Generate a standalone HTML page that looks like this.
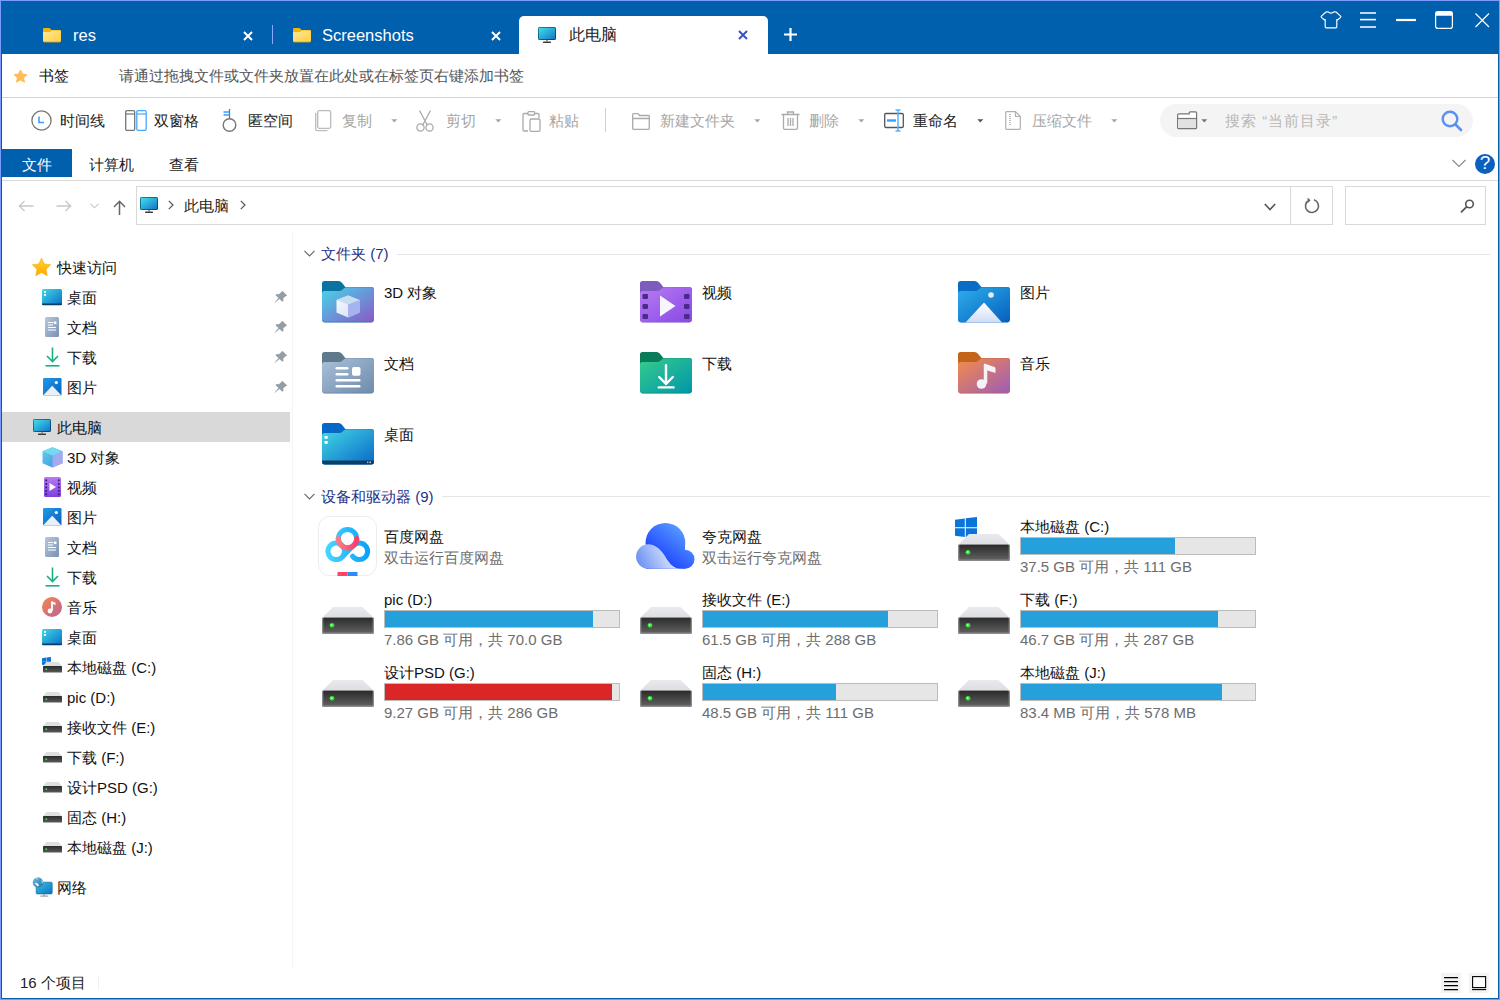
<!DOCTYPE html>
<html><head><meta charset="utf-8">
<style>
*{box-sizing:border-box;margin:0;padding:0}
html,body{width:1500px;height:1000px;overflow:hidden;background:#fff}
body{font-family:"Liberation Sans",sans-serif;font-size:15px;color:#000;position:relative}
.a{position:absolute;white-space:nowrap}
.t{position:absolute;white-space:nowrap;line-height:20px}
svg{position:absolute;overflow:visible}
</style></head><body>
<div class="a" style="left:0;top:0;width:1500px;height:1000px;border:1px solid #7b9bff"></div>
<div class="a" style="left:1px;top:1px;width:1498px;height:998px;border-left:1px solid #0060ae;border-right:1px solid #0060ae;border-bottom:1px solid #0060ae"></div>
<div class="a" style="left:1px;top:1px;width:1498px;height:53px;background:#0060ae"></div>

<svg style="left:43px;top:28px" width="18" height="14" viewBox="0 0 18 14"><defs><linearGradient id="fg42" x1="0" y1="0" x2="1" y2="1"><stop offset="0" stop-color="#ffe8a0"/><stop offset="1" stop-color="#ffcf3a"/></linearGradient></defs><path d="M0 1.2Q0 0 1.2 0H6Q6.7 0 7.2 0.6L8.5 2H16.8Q18 2 18 3.2V5H0Z" fill="#f5b40a"/><path d="M0 4H7.3L8.1 2.9Q8.4 2.5 8.9 2.5H16.8Q18 2.5 18 3.7V12.8Q18 14 16.8 14H1.2Q0 14 0 12.8Z" fill="url(#fg42)"/><path d="M0.3 13.2Q0.6 14 1.2 14H16.8Q17.4 14 17.7 13.2" stroke="#f0a800" stroke-width="0.8" fill="none"/></svg>
<div class="t" style="left:73px;top:25px;color:#fff;font-size:16.5px">res</div>
<svg style="left:243px;top:31px" width="10" height="10" viewBox="0 0 10 10"><path d="M1 1L9 9M9 1L1 9" stroke="#fff" stroke-width="2"/></svg>
<div class="a" style="left:272px;top:25px;width:1px;height:19px;background:#8aa8ff"></div>
<svg style="left:293px;top:28px" width="18" height="14" viewBox="0 0 18 14"><defs><linearGradient id="fg292" x1="0" y1="0" x2="1" y2="1"><stop offset="0" stop-color="#ffe8a0"/><stop offset="1" stop-color="#ffcf3a"/></linearGradient></defs><path d="M0 1.2Q0 0 1.2 0H6Q6.7 0 7.2 0.6L8.5 2H16.8Q18 2 18 3.2V5H0Z" fill="#f5b40a"/><path d="M0 4H7.3L8.1 2.9Q8.4 2.5 8.9 2.5H16.8Q18 2.5 18 3.7V12.8Q18 14 16.8 14H1.2Q0 14 0 12.8Z" fill="url(#fg292)"/><path d="M0.3 13.2Q0.6 14 1.2 14H16.8Q17.4 14 17.7 13.2" stroke="#f0a800" stroke-width="0.8" fill="none"/></svg>
<div class="t" style="left:322px;top:25px;color:#fff;font-size:16.5px">Screenshots</div>
<svg style="left:491px;top:31px" width="10" height="10" viewBox="0 0 10 10"><path d="M1 1L9 9M9 1L1 9" stroke="#fff" stroke-width="2"/></svg>
<div class="a" style="left:519px;top:16px;width:249px;height:38px;background:#fff;border-radius:5px 5px 0 0"></div>
<svg style="left:538px;top:27px" width="19" height="17" viewBox="0 0 19 17"><defs><linearGradient id="mgtab" x1="0" y1="0" x2="1" y2="1"><stop offset="0" stop-color="#42e2ec"/><stop offset="1" stop-color="#1272c6"/></linearGradient><linearGradient id="mbtab" x1="0" y1="0" x2="1" y2="1"><stop offset="0" stop-color="#168a9c"/><stop offset="1" stop-color="#0a3c78"/></linearGradient></defs><rect x="0.5" y="0.5" width="17" height="12" rx="0.6" fill="url(#mgtab)" stroke="url(#mbtab)" stroke-width="1"/><rect x="8" y="13" width="2" height="1.6" fill="#9aa0a6"/><rect x="5" y="14.6" width="8" height="1.5" rx="0.6" fill="#3c3c3c"/></svg>
<div class="t" style="left:569px;top:25px;color:#222;font-size:16px">此电脑</div>
<svg style="left:738px;top:30px" width="10" height="10" viewBox="0 0 10 10"><path d="M1 1L9 9M9 1L1 9" stroke="#3752c8" stroke-width="2"/></svg>
<svg style="left:783px;top:27px" width="15" height="15" viewBox="0 0 15 15"><path d="M7.5 1V14M1 7.5H14" stroke="#fff" stroke-width="2.2"/></svg>
<svg style="left:1321px;top:10px" width="21" height="20" viewBox="0 0 21 20"><path d="M5 2Q7.5 1.5 8.3 2.5Q10 3.8 11.7 2.5Q12.5 1.5 15 2L19.6 6.2Q20.2 6.8 19.6 7.4L16.5 10L15.8 9.6V17Q15.8 17.9 14.9 17.9H5.1Q4.2 17.9 4.2 17V9.6L3.5 10L0.4 7.4Q-0.2 6.8 0.4 6.2Z" fill="none" stroke="#fff" stroke-width="1.15" stroke-linejoin="round"/></svg>
<svg style="left:1360px;top:11px" width="17" height="18" viewBox="0 0 17 18"><path d="M0 2H16M0 16H16" stroke="#c4d6ec" stroke-width="1.8"/><path d="M0 8.6H16" stroke="#fff" stroke-width="1.6"/></svg>
<svg style="left:1396px;top:18px" width="21" height="4" viewBox="0 0 21 4"><path d="M0 2H20" stroke="#fff" stroke-width="2.2"/></svg>
<svg style="left:1435px;top:11px" width="19" height="19" viewBox="0 0 19 19"><rect x="0.6" y="0.6" width="16.8" height="16.8" rx="2.2" fill="none" stroke="#fff" stroke-width="1.2"/><path d="M0.6 2.8Q0.6 0.6 2.8 0.6H15.2Q17.4 0.6 17.4 2.8V4.8H0.6Z" fill="#fff"/></svg>
<svg style="left:1475px;top:13px" width="15" height="15" viewBox="0 0 15 15"><path d="M0.5 0.5L14 14M14 0.5L0.5 14" stroke="#fff" stroke-width="1.2"/></svg>


<svg style="left:13px;top:69px" width="15" height="15" viewBox="0 0 24 24"><path d="M12 1.5l3.1 6.6 7.2.9-5.3 5 1.4 7.1L12 17.6 5.6 21.1 7 14l-5.3-5 7.2-.9z" fill="#ffbb55" stroke="#ffbb55" stroke-width="1.5" stroke-linejoin="round"/></svg>
<div class="t" style="left:39px;top:66px;color:#111">书签</div>
<div class="t" style="left:119px;top:66px;color:#555">请通过拖拽文件或文件夹放置在此处或在标签页右键添加书签</div>
<div class="a" style="left:2px;top:97px;width:1496px;height:1px;background:#d4d4d4"></div>


<svg style="left:31px;top:110px" width="21" height="21" viewBox="0 0 21 21"><circle cx="10.5" cy="10.5" r="9.6" fill="none" stroke="#777" stroke-width="1.3"/><path d="M8 6.5V12.5H13" fill="none" stroke="#3aa0ff" stroke-width="1.6"/></svg>
<div class="t" style="left:60px;top:111px;color:#222">时间线</div>
<svg style="left:125px;top:110px" width="22" height="21" viewBox="0 0 22 21"><rect x="0.7" y="0.7" width="9" height="19.6" rx="1.2" fill="none" stroke="#777" stroke-width="1.3"/><path d="M1 4H9.5" stroke="#777" stroke-width="1.2"/><rect x="11.8" y="0.7" width="9.4" height="19.6" rx="1.2" fill="none" stroke="#46a8ff" stroke-width="1.3"/><path d="M12 4H21" stroke="#46a8ff" stroke-width="1.2"/></svg>
<div class="t" style="left:154px;top:111px;color:#222">双窗格</div>
<svg style="left:221px;top:109px" width="17" height="23" viewBox="0 0 17 23"><path d="M8.5 0V10" stroke="#777" stroke-width="1.3"/><path d="M2.5 3H8M2.5 6H8" stroke="#3aa0ff" stroke-width="1.3"/><circle cx="8.5" cy="16" r="6.3" fill="none" stroke="#777" stroke-width="1.4"/></svg>
<div class="t" style="left:248px;top:111px;color:#222">匿空间</div>
<svg style="left:315px;top:110px" width="17" height="22" viewBox="0 0 17 22"><path d="M0.7 3V19.3Q0.7 20.6 2 20.6H12.5" fill="none" stroke="#bbb" stroke-width="1.3"/><rect x="2.7" y="0.7" width="13" height="17.6" rx="1.5" fill="#fff" stroke="#bbb" stroke-width="1.3"/></svg>
<div class="t" style="left:342px;top:111px;color:#a6a6a6">复制</div>
<svg style="left:391px;top:119px" width="7" height="4" viewBox="0 0 7 4"><path d="M0.3 0.2H6.3L3.3 3.4Z" fill="#a6a6a6"/></svg>
<svg style="left:416px;top:110px" width="18" height="22" viewBox="0 0 18 22"><path d="M3.5 0.5L11.5 15.5M14.5 0.5L6.5 15.5" stroke="#aaa" stroke-width="1.3"/><circle cx="4.5" cy="17.5" r="3.6" fill="none" stroke="#aaa" stroke-width="1.3"/><circle cx="13.5" cy="17.5" r="3.6" fill="none" stroke="#aaa" stroke-width="1.3"/></svg>
<div class="t" style="left:446px;top:111px;color:#a6a6a6">剪切</div>
<svg style="left:495px;top:119px" width="7" height="4" viewBox="0 0 7 4"><path d="M0.3 0.2H6.3L3.3 3.4Z" fill="#a6a6a6"/></svg>
<svg style="left:522px;top:111px" width="19" height="21" viewBox="0 0 19 21"><path d="M6 2.5H2Q1 2.5 1 3.5V19Q1 20 2 20H6" fill="none" stroke="#aaa" stroke-width="1.3"/><path d="M12.5 2.5H16Q17 2.5 17 3.5V7" fill="none" stroke="#aaa" stroke-width="1.3"/><rect x="6" y="0.7" width="6.5" height="3.3" rx="0.8" fill="none" stroke="#aaa" stroke-width="1.3"/><rect x="8" y="8" width="10" height="12.3" rx="1.2" fill="#fff" stroke="#aaa" stroke-width="1.3"/></svg>
<div class="t" style="left:549px;top:111px;color:#a6a6a6">粘贴</div>
<div class="a" style="left:605px;top:108px;width:1px;height:24px;background:#d0d0d0"></div>
<svg style="left:632px;top:113px" width="18" height="17" viewBox="0 0 18 17"><path d="M0.7 1.5Q0.7 0.7 1.5 0.7H6L7.5 2.5H16.5Q17.3 2.5 17.3 3.3V15.5Q17.3 16.3 16.5 16.3H1.5Q0.7 16.3 0.7 15.5Z M0.7 5.5H17" fill="none" stroke="#aaa" stroke-width="1.3"/></svg>
<div class="t" style="left:660px;top:111px;color:#a6a6a6">新建文件夹</div>
<svg style="left:754px;top:119px" width="7" height="4" viewBox="0 0 7 4"><path d="M0.3 0.2H6.3L3.3 3.4Z" fill="#a6a6a6"/></svg>
<svg style="left:781px;top:111px" width="19" height="19" viewBox="0 0 19 19"><path d="M0.5 3.5H18.5M6.5 3.5V1H12.5V3.5M2.5 3.5V17Q2.5 18.3 3.8 18.3H15.2Q16.5 18.3 16.5 17V3.5M7 7V15M9.5 7V15M12 7V15" fill="none" stroke="#aaa" stroke-width="1.3"/></svg>
<div class="t" style="left:809px;top:111px;color:#a6a6a6">删除</div>
<svg style="left:858px;top:119px" width="7" height="4" viewBox="0 0 7 4"><path d="M0.3 0.2H6.3L3.3 3.4Z" fill="#a6a6a6"/></svg>
<svg style="left:884px;top:109px" width="21" height="23" viewBox="0 0 21 23"><rect x="0.7" y="4.5" width="18.6" height="14" rx="1.2" fill="none" stroke="#555" stroke-width="1.3"/><path d="M3 11.5H12" stroke="#3aa0ff" stroke-width="2.4"/><path d="M14 1V22M11.5 1H16.5M11.5 22H16.5" stroke="#56b4ff" stroke-width="1.5"/></svg>
<div class="t" style="left:913px;top:111px;color:#222">重命名</div>
<svg style="left:977px;top:119px" width="7" height="4" viewBox="0 0 7 4"><path d="M0.3 0.2H6.3L3.3 3.4Z" fill="#555"/></svg>
<svg style="left:1005px;top:111px" width="16" height="19" viewBox="0 0 16 19"><path d="M1.5 0.7H10.5L15.3 5.5V17.5Q15.3 18.3 14.5 18.3H1.5Q0.7 18.3 0.7 17.5V1.5Q0.7 0.7 1.5 0.7Z M10.5 0.7V5.5H15.3" fill="none" stroke="#b0b0b0" stroke-width="1.2"/><path d="M5 3V14" stroke="#bbb" stroke-width="2" stroke-dasharray="1,1"/></svg>
<div class="t" style="left:1032px;top:111px;color:#a6a6a6">压缩文件</div>
<svg style="left:1111px;top:119px" width="7" height="4" viewBox="0 0 7 4"><path d="M0.3 0.2H6.3L3.3 3.4Z" fill="#a6a6a6"/></svg>
<div class="a" style="left:1160px;top:104px;width:313px;height:33px;border-radius:17px;background:#f4f4f4"></div>
<svg style="left:1177px;top:111px" width="21" height="19" viewBox="0 0 21 19"><path d="M0.6 3.9Q0.6 2.9 1.6 2.9H12.2V1.8Q12.2 0.9 13.2 0.9H18.6Q19.6 0.9 19.6 1.9V16.7Q19.6 17.6 18.6 17.6H1.6Q0.6 17.6 0.6 16.6Z" fill="#fff" stroke="#777" stroke-width="1.2"/><rect x="1.2" y="7.5" width="17.8" height="9.5" fill="#e2e2e2"/><path d="M0.6 7.5H19.6" stroke="#777" stroke-width="1.2"/></svg>
<svg style="left:1201px;top:119px" width="7" height="4" viewBox="0 0 7 4"><path d="M0.3 0.2H6.3L3.3 3.4Z" fill="#777"/></svg>
<div class="t" style="left:1225px;top:111px;color:#b8b8b8;letter-spacing:1px">搜索 “当前目录”</div>
<svg style="left:1441px;top:110px" width="22" height="22" viewBox="0 0 22 22"><circle cx="9" cy="9" r="7.3" fill="none" stroke="#5b8ff2" stroke-width="2.4"/><path d="M14.5 14.5L20 20" stroke="#5b8ff2" stroke-width="2.6" stroke-linecap="round"/></svg>


<div class="a" style="left:2px;top:149px;width:70px;height:28px;background:#0060ae"></div>
<div class="t" style="left:22px;top:155px;color:#fff">文件</div>
<div class="t" style="left:89px;top:155px;color:#222">计算机</div>
<div class="t" style="left:169px;top:155px;color:#222">查看</div>
<svg style="left:1452px;top:159px" width="14" height="9" viewBox="0 0 14 9"><path d="M0.5 1L7 7.5L13.5 1" fill="none" stroke="#888" stroke-width="1.1"/></svg>
<svg style="left:1475px;top:154px" width="20" height="20" viewBox="0 0 20 20"><circle cx="10" cy="10" r="10" fill="#0a5fbf"/></svg>
<div class="t" style="left:1479px;top:153px;color:#fff;font-size:19px;width:12px;text-align:center">?</div>
<div class="a" style="left:2px;top:180px;width:1496px;height:1px;background:#dadada"></div>


<svg style="left:18px;top:200px" width="16" height="12" viewBox="0 0 16 12"><path d="M15.5 6H1.5M6.5 1L1.3 6L6.5 11" fill="none" stroke="#c8c8c8" stroke-width="1.3"/></svg>
<svg style="left:56px;top:200px" width="16" height="12" viewBox="0 0 16 12"><path d="M0.5 6H14.5M9.5 1L14.7 6L9.5 11" fill="none" stroke="#c8c8c8" stroke-width="1.3"/></svg>
<svg style="left:90px;top:203px" width="9" height="6" viewBox="0 0 9 6"><path d="M0.5 0.8L4.5 4.8L8.5 0.8" fill="none" stroke="#c8c8c8" stroke-width="1.1"/></svg>
<svg style="left:113px;top:200px" width="13" height="15" viewBox="0 0 13 15"><path d="M6.5 15V1.5M1 7L6.5 1.3L12 7" fill="none" stroke="#666" stroke-width="1.5"/></svg>
<div class="a" style="left:136px;top:186px;width:1197px;height:39px;border:1px solid #d9d9d9"></div>
<div class="a" style="left:1290px;top:186px;width:1px;height:39px;background:#d9d9d9"></div>
<svg style="left:140px;top:197px" width="19" height="17" viewBox="0 0 19 17"><defs><linearGradient id="mgaddr" x1="0" y1="0" x2="1" y2="1"><stop offset="0" stop-color="#42e2ec"/><stop offset="1" stop-color="#1272c6"/></linearGradient><linearGradient id="mbaddr" x1="0" y1="0" x2="1" y2="1"><stop offset="0" stop-color="#168a9c"/><stop offset="1" stop-color="#0a3c78"/></linearGradient></defs><rect x="0.5" y="0.5" width="17" height="12" rx="0.6" fill="url(#mgaddr)" stroke="url(#mbaddr)" stroke-width="1"/><rect x="8" y="13" width="2" height="1.6" fill="#9aa0a6"/><rect x="5" y="14.6" width="8" height="1.5" rx="0.6" fill="#3c3c3c"/></svg>
<svg style="left:168px;top:200px" width="6" height="10" viewBox="0 0 6 10"><path d="M0.8 0.8L5 5L0.8 9.2" fill="none" stroke="#555" stroke-width="1.2"/></svg>
<div class="t" style="left:184px;top:196px;color:#222">此电脑</div>
<svg style="left:240px;top:200px" width="6" height="10" viewBox="0 0 6 10"><path d="M0.8 0.8L5 5L0.8 9.2" fill="none" stroke="#555" stroke-width="1.2"/></svg>
<svg style="left:1264px;top:203px" width="12" height="8" viewBox="0 0 12 8"><path d="M0.8 1L6 6.5L11.2 1" fill="none" stroke="#555" stroke-width="1.6"/></svg>
<svg style="left:1304px;top:198px" width="16" height="16" viewBox="0 0 16 16"><path d="M5 2.2A6.5 6.5 0 1 0 10 1.8" fill="none" stroke="#666" stroke-width="1.6"/><path d="M3.5 0.5L5.5 2.3L3.5 4.2" fill="none" stroke="#666" stroke-width="1.5"/></svg>
<div class="a" style="left:1345px;top:186px;width:141px;height:39px;border:1px solid #d9d9d9"></div>
<svg style="left:1460px;top:199px" width="15" height="14" viewBox="0 0 15 14"><circle cx="9.5" cy="5" r="3.8" fill="none" stroke="#555" stroke-width="1.6"/><path d="M6.8 7.7L1 13.3" stroke="#555" stroke-width="1.8"/></svg>
<div class="a" style="left:292px;top:232px;width:1px;height:736px;background:#f4f4f4"></div>
<svg style="left:31px;top:257px" width="21" height="21" viewBox="0 0 24 24"><defs><linearGradient id="u1" x1="0" y1="0" x2="0" y2="1"><stop offset="0" stop-color="#ffd52e"/><stop offset="1" stop-color="#ffa800"/></linearGradient></defs><path d="M12 1.2l3.2 6.7 7.3 1-5.3 5.1 1.3 7.3L12 17.8l-6.5 3.5 1.3-7.3L1.5 8.9l7.3-1z" fill="url(#u1)" stroke="#f0a500" stroke-width="0.6" stroke-linejoin="round"/></svg>
<div class="t" style="left:57px;top:258px;color:#111;">快速访问</div>
<svg style="left:42px;top:289px" width="21" height="17" viewBox="0 0 21 17"><defs><linearGradient id="u2" x1="0" y1="0" x2="1" y2="1"><stop offset="0" stop-color="#3fd8e8"/><stop offset="1" stop-color="#0b6fc6"/></linearGradient></defs><rect x="0" y="0" width="20" height="16" rx="1.5" fill="url(#u2)"/><path d="M0 14.5H20V15Q20 16.3 18.7 16.3H1.3Q0 16.3 0 15Z" fill="#0a3d66"/><rect x="2" y="2" width="2" height="1.8" fill="#fff"/><rect x="2" y="5" width="2" height="1.8" fill="#fff"/></svg>
<div class="t" style="left:67px;top:288px;color:#111;">桌面</div>
<svg style="left:274px;top:290px" width="14" height="13" viewBox="0 0 14 13"><path d="M8.2 0.8L13.2 5.6L11.6 6.2L9.2 8.6L9.5 10.8L8.3 11.8L5.5 9L1 12.8L0.6 12.4L4.5 8L1.6 5.2L2.6 4L4.8 4.3L7.4 1.9Z" fill="#939ea6"/></svg>
<svg style="left:45px;top:317px" width="15" height="20" viewBox="0 0 15 20"><defs><linearGradient id="u3" x1="0" y1="0" x2="1" y2="1"><stop offset="0" stop-color="#b7c8dc"/><stop offset="1" stop-color="#7892b2"/></linearGradient></defs><rect x="0" y="0" width="14" height="20" rx="1.5" fill="url(#u3)"/><path d="M3 5.5H8M3 8H8M3 10.5H11M3 13H11" stroke="#fff" stroke-width="1"/><rect x="8.8" y="4.5" width="2.6" height="2.6" fill="#fff"/></svg>
<div class="t" style="left:67px;top:318px;color:#111;">文档</div>
<svg style="left:274px;top:320px" width="14" height="13" viewBox="0 0 14 13"><path d="M8.2 0.8L13.2 5.6L11.6 6.2L9.2 8.6L9.5 10.8L8.3 11.8L5.5 9L1 12.8L0.6 12.4L4.5 8L1.6 5.2L2.6 4L4.8 4.3L7.4 1.9Z" fill="#939ea6"/></svg>
<svg style="left:45px;top:347px" width="15" height="20" viewBox="0 0 15 20"><path d="M7.5 0.5V14.5M2 9L7.5 14.5L13 9" fill="none" stroke="#1aae82" stroke-width="1.6"/><path d="M0.5 18.8H14.5" stroke="#1aae82" stroke-width="1.6"/></svg>
<div class="t" style="left:67px;top:348px;color:#111;">下载</div>
<svg style="left:274px;top:350px" width="14" height="13" viewBox="0 0 14 13"><path d="M8.2 0.8L13.2 5.6L11.6 6.2L9.2 8.6L9.5 10.8L8.3 11.8L5.5 9L1 12.8L0.6 12.4L4.5 8L1.6 5.2L2.6 4L4.8 4.3L7.4 1.9Z" fill="#939ea6"/></svg>
<svg style="left:43px;top:378px" width="19" height="18" viewBox="0 0 19 18"><defs><linearGradient id="u4" x1="0" y1="0" x2="1" y2="1"><stop offset="0" stop-color="#1f9be8"/><stop offset="1" stop-color="#0a60c0"/></linearGradient></defs><rect x="0" y="0" width="18.5" height="17.5" rx="1.2" fill="url(#u4)"/><circle cx="13.3" cy="4.5" r="1.6" fill="#fff"/><path d="M0 17.5L9.2 7.8L18.5 17.5Z" fill="#e8f0fb"/></svg>
<div class="t" style="left:67px;top:378px;color:#111;">图片</div>
<svg style="left:274px;top:380px" width="14" height="13" viewBox="0 0 14 13"><path d="M8.2 0.8L13.2 5.6L11.6 6.2L9.2 8.6L9.5 10.8L8.3 11.8L5.5 9L1 12.8L0.6 12.4L4.5 8L1.6 5.2L2.6 4L4.8 4.3L7.4 1.9Z" fill="#939ea6"/></svg>
<div class="a" style="left:2px;top:412px;width:288px;height:30px;background:#d9d9d9"></div>
<svg style="left:33px;top:419px" width="19" height="17" viewBox="0 0 19 17"><defs><linearGradient id="mgu5" x1="0" y1="0" x2="1" y2="1"><stop offset="0" stop-color="#42e2ec"/><stop offset="1" stop-color="#1272c6"/></linearGradient><linearGradient id="mbu5" x1="0" y1="0" x2="1" y2="1"><stop offset="0" stop-color="#168a9c"/><stop offset="1" stop-color="#0a3c78"/></linearGradient></defs><rect x="0.5" y="0.5" width="17" height="12" rx="0.6" fill="url(#mgu5)" stroke="url(#mbu5)" stroke-width="1"/><rect x="8" y="13" width="2" height="1.6" fill="#9aa0a6"/><rect x="5" y="14.6" width="8" height="1.5" rx="0.6" fill="#3c3c3c"/></svg>
<div class="t" style="left:57px;top:418px;color:#111;">此电脑</div>
<svg style="left:42px;top:447px" width="21" height="21" viewBox="0 0 21 21"><defs><linearGradient id="u6" x1="0" y1="0" x2="1" y2="1"><stop offset="0" stop-color="#62d2f0"/><stop offset="1" stop-color="#3b8fd8"/></linearGradient><linearGradient id="u7" x1="0" y1="0" x2="1" y2="1"><stop offset="0" stop-color="#8fb0f0"/><stop offset="1" stop-color="#b7a4ec"/></linearGradient></defs><path d="M10.5 0.3L20.5 4.3V16.3L10.5 20.5L0.5 16.3V4.3Z" fill="url(#u6)"/><path d="M10.5 8.5V20.5L20.5 16.3V4.3Z" fill="url(#u7)"/><path d="M0.5 4.3L10.5 8.5L20.5 4.3L10.5 0.3Z" fill="#77d8f2"/></svg>
<div class="t" style="left:67px;top:448px;color:#111;">3D 对象</div>
<svg style="left:44px;top:477px" width="17" height="20" viewBox="0 0 17 20"><defs><linearGradient id="u8" x1="0" y1="0" x2="0" y2="1"><stop offset="0" stop-color="#b77af2"/><stop offset="1" stop-color="#7f3fe0"/></linearGradient></defs><rect x="0" y="0" width="17" height="20" rx="1.5" fill="url(#u8)"/><rect x="1.3" y="2.5" width="1.8" height="1.8" fill="#3b1f72"/><rect x="1.3" y="6" width="1.8" height="1.8" fill="#3b1f72"/><rect x="1.3" y="9.5" width="1.8" height="1.8" fill="#3b1f72"/><rect x="1.3" y="13" width="1.8" height="1.8" fill="#3b1f72"/><rect x="1.3" y="16.3" width="1.8" height="1.8" fill="#3b1f72"/><rect x="13.9" y="2.5" width="1.8" height="1.8" fill="#3b1f72"/><rect x="13.9" y="6" width="1.8" height="1.8" fill="#3b1f72"/><rect x="13.9" y="9.5" width="1.8" height="1.8" fill="#3b1f72"/><rect x="13.9" y="13" width="1.8" height="1.8" fill="#3b1f72"/><rect x="13.9" y="16.3" width="1.8" height="1.8" fill="#3b1f72"/><path d="M5.5 6L12 10L5.5 14Z" fill="#fff"/></svg>
<div class="t" style="left:67px;top:478px;color:#111;">视频</div>
<svg style="left:43px;top:508px" width="19" height="18" viewBox="0 0 19 18"><defs><linearGradient id="u9" x1="0" y1="0" x2="1" y2="1"><stop offset="0" stop-color="#1f9be8"/><stop offset="1" stop-color="#0a60c0"/></linearGradient></defs><rect x="0" y="0" width="18.5" height="17.5" rx="1.2" fill="url(#u9)"/><circle cx="13.3" cy="4.5" r="1.6" fill="#fff"/><path d="M0 17.5L9.2 7.8L18.5 17.5Z" fill="#e8f0fb"/></svg>
<div class="t" style="left:67px;top:508px;color:#111;">图片</div>
<svg style="left:45px;top:537px" width="15" height="20" viewBox="0 0 15 20"><defs><linearGradient id="u10" x1="0" y1="0" x2="1" y2="1"><stop offset="0" stop-color="#b7c8dc"/><stop offset="1" stop-color="#7892b2"/></linearGradient></defs><rect x="0" y="0" width="14" height="20" rx="1.5" fill="url(#u10)"/><path d="M3 5.5H8M3 8H8M3 10.5H11M3 13H11" stroke="#fff" stroke-width="1"/><rect x="8.8" y="4.5" width="2.6" height="2.6" fill="#fff"/></svg>
<div class="t" style="left:67px;top:538px;color:#111;">文档</div>
<svg style="left:45px;top:567px" width="15" height="20" viewBox="0 0 15 20"><path d="M7.5 0.5V14.5M2 9L7.5 14.5L13 9" fill="none" stroke="#1aae82" stroke-width="1.6"/><path d="M0.5 18.8H14.5" stroke="#1aae82" stroke-width="1.6"/></svg>
<div class="t" style="left:67px;top:568px;color:#111;">下载</div>
<svg style="left:42px;top:597px" width="20" height="20" viewBox="0 0 20 20"><defs><linearGradient id="u11" x1="0" y1="0" x2="1" y2="1"><stop offset="0" stop-color="#f58a48"/><stop offset="1" stop-color="#b8609e"/></linearGradient></defs><circle cx="10" cy="10" r="10" fill="url(#u11)"/><path d="M10 4.5V13.5" stroke="#fff" stroke-width="1.8"/><path d="M9.5 4.2L13.5 5.8V8L9.5 6.6Z" fill="#fff"/><circle cx="8" cy="14" r="2.4" fill="#fff"/></svg>
<div class="t" style="left:67px;top:598px;color:#111;">音乐</div>
<svg style="left:42px;top:629px" width="21" height="17" viewBox="0 0 21 17"><defs><linearGradient id="u12" x1="0" y1="0" x2="1" y2="1"><stop offset="0" stop-color="#3fd8e8"/><stop offset="1" stop-color="#0b6fc6"/></linearGradient></defs><rect x="0" y="0" width="20" height="16" rx="1.5" fill="url(#u12)"/><path d="M0 14.5H20V15Q20 16.3 18.7 16.3H1.3Q0 16.3 0 15Z" fill="#0a3d66"/><rect x="2" y="2" width="2" height="1.8" fill="#fff"/><rect x="2" y="5" width="2" height="1.8" fill="#fff"/></svg>
<div class="t" style="left:67px;top:628px;color:#111;">桌面</div>
<svg style="left:42px;top:657px" width="9" height="9" viewBox="0 0 22 22"><path d="M0 2.8L9.8 1.5V10.3H0Z M10.8 1.35L22 0V10.3H10.8Z M0 11.3H9.8V20L0 18.7Z M10.8 11.3H22V21.5L10.8 20.1Z" fill="#0a74da"/></svg><svg style="left:43px;top:662px" width="19" height="11" viewBox="0 0 19 11"><defs><linearGradient id="u13" x1="0" y1="0" x2="0" y2="1"><stop offset="0" stop-color="#2b2b2b"/><stop offset="1" stop-color="#5a5a5a"/></linearGradient></defs><path d="M3.5 0H15.5L19 4H0Z" fill="#dedfe2"/><rect x="0" y="4" width="19" height="6.5" rx="0.6" fill="url(#u13)"/><circle cx="3.3" cy="7.2" r="0.9" fill="#3fe03f"/></svg>
<div class="t" style="left:67px;top:658px;color:#111;">本地磁盘 (C:)</div>
<svg style="left:43px;top:692px" width="19" height="11" viewBox="0 0 19 11"><defs><linearGradient id="u14" x1="0" y1="0" x2="0" y2="1"><stop offset="0" stop-color="#2b2b2b"/><stop offset="1" stop-color="#5a5a5a"/></linearGradient></defs><path d="M3.5 0H15.5L19 4H0Z" fill="#dedfe2"/><rect x="0" y="4" width="19" height="6.5" rx="0.6" fill="url(#u14)"/><circle cx="3.3" cy="7.2" r="0.9" fill="#3fe03f"/></svg>
<div class="t" style="left:67px;top:688px;color:#111;">pic (D:)</div>
<svg style="left:43px;top:722px" width="19" height="11" viewBox="0 0 19 11"><defs><linearGradient id="u15" x1="0" y1="0" x2="0" y2="1"><stop offset="0" stop-color="#2b2b2b"/><stop offset="1" stop-color="#5a5a5a"/></linearGradient></defs><path d="M3.5 0H15.5L19 4H0Z" fill="#dedfe2"/><rect x="0" y="4" width="19" height="6.5" rx="0.6" fill="url(#u15)"/><circle cx="3.3" cy="7.2" r="0.9" fill="#3fe03f"/></svg>
<div class="t" style="left:67px;top:718px;color:#111;">接收文件 (E:)</div>
<svg style="left:43px;top:752px" width="19" height="11" viewBox="0 0 19 11"><defs><linearGradient id="u16" x1="0" y1="0" x2="0" y2="1"><stop offset="0" stop-color="#2b2b2b"/><stop offset="1" stop-color="#5a5a5a"/></linearGradient></defs><path d="M3.5 0H15.5L19 4H0Z" fill="#dedfe2"/><rect x="0" y="4" width="19" height="6.5" rx="0.6" fill="url(#u16)"/><circle cx="3.3" cy="7.2" r="0.9" fill="#3fe03f"/></svg>
<div class="t" style="left:67px;top:748px;color:#111;">下载 (F:)</div>
<svg style="left:43px;top:782px" width="19" height="11" viewBox="0 0 19 11"><defs><linearGradient id="u17" x1="0" y1="0" x2="0" y2="1"><stop offset="0" stop-color="#2b2b2b"/><stop offset="1" stop-color="#5a5a5a"/></linearGradient></defs><path d="M3.5 0H15.5L19 4H0Z" fill="#dedfe2"/><rect x="0" y="4" width="19" height="6.5" rx="0.6" fill="url(#u17)"/><circle cx="3.3" cy="7.2" r="0.9" fill="#3fe03f"/></svg>
<div class="t" style="left:67px;top:778px;color:#111;">设计PSD (G:)</div>
<svg style="left:43px;top:812px" width="19" height="11" viewBox="0 0 19 11"><defs><linearGradient id="u18" x1="0" y1="0" x2="0" y2="1"><stop offset="0" stop-color="#2b2b2b"/><stop offset="1" stop-color="#5a5a5a"/></linearGradient></defs><path d="M3.5 0H15.5L19 4H0Z" fill="#dedfe2"/><rect x="0" y="4" width="19" height="6.5" rx="0.6" fill="url(#u18)"/><circle cx="3.3" cy="7.2" r="0.9" fill="#3fe03f"/></svg>
<div class="t" style="left:67px;top:808px;color:#111;">固态 (H:)</div>
<svg style="left:43px;top:842px" width="19" height="11" viewBox="0 0 19 11"><defs><linearGradient id="u19" x1="0" y1="0" x2="0" y2="1"><stop offset="0" stop-color="#2b2b2b"/><stop offset="1" stop-color="#5a5a5a"/></linearGradient></defs><path d="M3.5 0H15.5L19 4H0Z" fill="#dedfe2"/><rect x="0" y="4" width="19" height="6.5" rx="0.6" fill="url(#u19)"/><circle cx="3.3" cy="7.2" r="0.9" fill="#3fe03f"/></svg>
<div class="t" style="left:67px;top:838px;color:#111;">本地磁盘 (J:)</div>
<svg style="left:32px;top:877px" width="21" height="21" viewBox="0 0 21 21"><defs><linearGradient id="u20" x1="0" y1="0" x2="1" y2="1"><stop offset="0" stop-color="#34c6e2"/><stop offset="1" stop-color="#0f72c0"/></linearGradient><linearGradient id="u21" x1="0" y1="0" x2="1" y2="1"><stop offset="0" stop-color="#6cc0ea"/><stop offset="1" stop-color="#2470a2"/></linearGradient></defs><rect x="4.2" y="5.2" width="16" height="11.7" rx="1" fill="url(#u20)" stroke="#176e9c" stroke-width="0.7"/><rect x="11.4" y="17" width="1.6" height="2" fill="#9aa5ad"/><rect x="8.3" y="18.6" width="8" height="1.2" rx="0.5" fill="#9aa5ad"/><circle cx="5.9" cy="5.4" r="5.2" fill="url(#u21)"/><path d="M2.5 6.2L5 5.8L7.2 8.2L5.5 9.5Z M3.2 1.6L5.5 1.2L6 2.6Z M9.5 2.5L10.8 5.8L9.8 6.5Z" fill="#dff3fb"/></svg>
<div class="t" style="left:57px;top:878px;color:#111;">网络</div><svg style="left:304px;top:250px" width="11" height="7" viewBox="0 0 11 7"><path d="M0.5 0.8L5.5 6L10.5 0.8" fill="none" stroke="#666" stroke-width="1.1"/></svg>
<div class="t" style="left:321px;top:244px;color:#1e3287;">文件夹 (7)</div>
<div class="a" style="left:397px;top:254px;width:1093px;height:1px;background:#e5e5e5"></div>
<svg style="left:322px;top:281px" width="52" height="42" viewBox="0 0 52 42"><defs><linearGradient id="u24" x1="0" y1="0" x2="1" y2="1"><stop offset="0" stop-color="#46d6ea"/><stop offset="1" stop-color="#8b58c6"/></linearGradient></defs>
<path d="M0 2.5Q0 0 2.5 0H16.5Q18.5 0 20 1.8L23.3 6H49.5Q52 6 52 8.5V14H0Z" fill="#0b73a0"/>
<path d="M0 12.5Q0 10 2.5 10H17.5Q19.5 10 21 8.2L22 7.2Q23 6.3 25 6.3H49.5Q52 6.3 52 9V38.8Q52 41.2 49.5 41.2H2.5Q0 41.2 0 38.8Z" fill="url(#u24)"/>
<path d="M0.5 39.2Q1 41.2 2.5 41.2H49.5Q51 41.2 51.5 39.2" fill="none" stroke="#0b73a0" stroke-width="1" opacity="0.6"/>
<defs><linearGradient id="u22" x1="0" y1="0" x2="1" y2="1"><stop offset="0" stop-color="#ffffff"/><stop offset="1" stop-color="#d6e4f5"/></linearGradient></defs>
<path d="M26 14.5L37.5 19V31.5L26 36.5L14.5 31.5V19Z" fill="url(#u22)" opacity="0.95"/>
<path d="M14.5 19L26 23.5L37.5 19L26 14.5Z" fill="#c4def2"/>
<path d="M26 23.5V36.5L37.5 31.5V19Z" fill="#a7b3ef"/></svg>
<div class="t" style="left:384px;top:283px;color:#111;">3D 对象</div>
<svg style="left:640px;top:281px" width="52" height="42" viewBox="0 0 52 42"><defs><linearGradient id="u25" x1="0" y1="0" x2="1" y2="1"><stop offset="0" stop-color="#b77cf2"/><stop offset="1" stop-color="#8848e6"/></linearGradient></defs>
<path d="M0 2.5Q0 0 2.5 0H16.5Q18.5 0 20 1.8L23.3 6H49.5Q52 6 52 8.5V14H0Z" fill="#7d5cbd"/>
<path d="M0 12.5Q0 10 2.5 10H17.5Q19.5 10 21 8.2L22 7.2Q23 6.3 25 6.3H49.5Q52 6.3 52 9V38.8Q52 41.2 49.5 41.2H2.5Q0 41.2 0 38.8Z" fill="url(#u25)"/>
<path d="M0.5 39.2Q1 41.2 2.5 41.2H49.5Q51 41.2 51.5 39.2" fill="none" stroke="#7d5cbd" stroke-width="1" opacity="0.6"/>
<rect x="2.5" y="13" width="5.5" height="5" rx="1.2" fill="#4b2a86"/><rect x="2.5" y="23" width="5.5" height="5" rx="1.2" fill="#4b2a86"/><rect x="2.5" y="33" width="5.5" height="5" rx="1.2" fill="#4b2a86"/><rect x="44" y="13" width="5.5" height="5" rx="1.2" fill="#4b2a86"/><rect x="44" y="23" width="5.5" height="5" rx="1.2" fill="#4b2a86"/><rect x="44" y="33" width="5.5" height="5" rx="1.2" fill="#4b2a86"/><path d="M20 14.5L35.5 25L20 35.5Z" fill="#f8f5ff"/></svg>
<div class="t" style="left:702px;top:283px;color:#111;">视频</div>
<svg style="left:958px;top:281px" width="52" height="42" viewBox="0 0 52 42"><defs><linearGradient id="u26" x1="0" y1="0" x2="1" y2="1"><stop offset="0" stop-color="#2eaeea"/><stop offset="1" stop-color="#0660bf"/></linearGradient></defs>
<path d="M0 2.5Q0 0 2.5 0H16.5Q18.5 0 20 1.8L23.3 6H49.5Q52 6 52 8.5V14H0Z" fill="#0a6cc4"/>
<path d="M0 12.5Q0 10 2.5 10H17.5Q19.5 10 21 8.2L22 7.2Q23 6.3 25 6.3H49.5Q52 6.3 52 9V38.8Q52 41.2 49.5 41.2H2.5Q0 41.2 0 38.8Z" fill="url(#u26)"/>
<path d="M0.5 39.2Q1 41.2 2.5 41.2H49.5Q51 41.2 51.5 39.2" fill="none" stroke="#0a6cc4" stroke-width="1" opacity="0.6"/>
<defs><linearGradient id="u23" x1="0" y1="0" x2="0" y2="1"><stop offset="0" stop-color="#ffffff"/><stop offset="1" stop-color="#d0dcf5"/></linearGradient></defs><circle cx="33" cy="14" r="2.8" fill="#e6edf7"/><path d="M7.5 41.5L26 21.5L44 41.5Z" fill="url(#u23)"/></svg>
<div class="t" style="left:1020px;top:283px;color:#111;">图片</div>
<svg style="left:322px;top:352px" width="52" height="42" viewBox="0 0 52 42"><defs><linearGradient id="u27" x1="0" y1="0" x2="1" y2="1"><stop offset="0" stop-color="#aac0d8"/><stop offset="1" stop-color="#6d8bac"/></linearGradient></defs>
<path d="M0 2.5Q0 0 2.5 0H16.5Q18.5 0 20 1.8L23.3 6H49.5Q52 6 52 8.5V14H0Z" fill="#5f7a8a"/>
<path d="M0 12.5Q0 10 2.5 10H17.5Q19.5 10 21 8.2L22 7.2Q23 6.3 25 6.3H49.5Q52 6.3 52 9V38.8Q52 41.2 49.5 41.2H2.5Q0 41.2 0 38.8Z" fill="url(#u27)"/>
<path d="M0.5 39.2Q1 41.2 2.5 41.2H49.5Q51 41.2 51.5 39.2" fill="none" stroke="#5f7a8a" stroke-width="1" opacity="0.6"/>
<rect x="13.5" y="15" width="13" height="2.6" rx="1.3" fill="#fff"/><rect x="13.5" y="21" width="13" height="2.6" rx="1.3" fill="#fff"/>
<rect x="30" y="15" width="8.5" height="8.7" rx="1.8" fill="#fff"/><rect x="13.5" y="27" width="25" height="2.6" rx="1.3" fill="#fff"/><rect x="13.5" y="33" width="25" height="2.6" rx="1.3" fill="#fff"/></svg>
<div class="t" style="left:384px;top:354px;color:#111;">文档</div>
<svg style="left:640px;top:352px" width="52" height="42" viewBox="0 0 52 42"><defs><linearGradient id="u28" x1="0" y1="0" x2="1" y2="1"><stop offset="0" stop-color="#36cc8c"/><stop offset="1" stop-color="#0096aa"/></linearGradient></defs>
<path d="M0 2.5Q0 0 2.5 0H16.5Q18.5 0 20 1.8L23.3 6H49.5Q52 6 52 8.5V14H0Z" fill="#0a7c5a"/>
<path d="M0 12.5Q0 10 2.5 10H17.5Q19.5 10 21 8.2L22 7.2Q23 6.3 25 6.3H49.5Q52 6.3 52 9V38.8Q52 41.2 49.5 41.2H2.5Q0 41.2 0 38.8Z" fill="url(#u28)"/>
<path d="M0.5 39.2Q1 41.2 2.5 41.2H49.5Q51 41.2 51.5 39.2" fill="none" stroke="#0a7c5a" stroke-width="1" opacity="0.6"/>
<path d="M26 13.2V32M19.2 25L26 31.8L32.8 25" fill="none" stroke="#fff" stroke-width="2.4" stroke-linecap="round" stroke-linejoin="round"/><path d="M18.8 35.4H33.5" stroke="#fff" stroke-width="2.4" stroke-linecap="round"/></svg>
<div class="t" style="left:702px;top:354px;color:#111;">下载</div>
<svg style="left:958px;top:352px" width="52" height="42" viewBox="0 0 52 42"><defs><linearGradient id="u29" x1="0" y1="0" x2="1" y2="1"><stop offset="0" stop-color="#f58c48"/><stop offset="1" stop-color="#9c5cb8"/></linearGradient></defs>
<path d="M0 2.5Q0 0 2.5 0H16.5Q18.5 0 20 1.8L23.3 6H49.5Q52 6 52 8.5V14H0Z" fill="#c46418"/>
<path d="M0 12.5Q0 10 2.5 10H17.5Q19.5 10 21 8.2L22 7.2Q23 6.3 25 6.3H49.5Q52 6.3 52 9V38.8Q52 41.2 49.5 41.2H2.5Q0 41.2 0 38.8Z" fill="url(#u29)"/>
<path d="M0.5 39.2Q1 41.2 2.5 41.2H49.5Q51 41.2 51.5 39.2" fill="none" stroke="#c46418" stroke-width="1" opacity="0.6"/>
<g transform="translate(0,-2.5)"><path d="M27.5 15V34" stroke="#f6f2f6" stroke-width="3.5"/><path d="M26 14L36.5 17.5Q37.5 18 37.5 19V23.5L26 20Z" fill="#f6f2f6"/><circle cx="23.5" cy="34.5" r="4.8" fill="#f6f2f6"/></g></svg>
<div class="t" style="left:1020px;top:354px;color:#111;">音乐</div>
<svg style="left:322px;top:423px" width="52" height="42" viewBox="0 0 52 42"><defs><linearGradient id="u30" x1="0" y1="0" x2="1" y2="1"><stop offset="0" stop-color="#42d8e2"/><stop offset="1" stop-color="#0a68ca"/></linearGradient></defs>
<path d="M0 2.5Q0 0 2.5 0H16.5Q18.5 0 20 1.8L23.3 6H49.5Q52 6 52 8.5V14H0Z" fill="#0567c6"/>
<path d="M0 12.5Q0 10 2.5 10H17.5Q19.5 10 21 8.2L22 7.2Q23 6.3 25 6.3H49.5Q52 6.3 52 9V38.8Q52 41.2 49.5 41.2H2.5Q0 41.2 0 38.8Z" fill="url(#u30)"/>
<path d="M0.5 39.2Q1 41.2 2.5 41.2H49.5Q51 41.2 51.5 39.2" fill="none" stroke="#0567c6" stroke-width="1" opacity="0.6"/>
<rect x="2.5" y="13" width="3.2" height="2.8" rx="0.6" fill="#fff"/><rect x="2.5" y="18" width="3.2" height="2.8" rx="0.6" fill="#fff"/><path d="M0 37.5H52V39Q52 41.5 49.5 41.5H2.5Q0 41.5 0 39Z" fill="#0c3f66"/><rect x="45" y="38.5" width="1.3" height="1.6" fill="#9fb7c8"/><rect x="47.5" y="38.5" width="1.3" height="1.6" fill="#cfdbe3"/></svg>
<div class="t" style="left:384px;top:425px;color:#111;">桌面</div>
<svg style="left:304px;top:493px" width="11" height="7" viewBox="0 0 11 7"><path d="M0.5 0.8L5.5 6L10.5 0.8" fill="none" stroke="#666" stroke-width="1.1"/></svg>
<div class="t" style="left:321px;top:487px;color:#1e3287;">设备和驱动器 (9)</div>
<div class="a" style="left:442px;top:496px;width:1048px;height:1px;background:#e5e5e5"></div>
<svg style="left:318px;top:516px" width="59" height="60" viewBox="0 0 59 60"><defs><linearGradient id="u31" gradientUnits="userSpaceOnUse" x1="8" y1="0" x2="52" y2="0"><stop offset="0" stop-color="#48d6ff"/><stop offset="1" stop-color="#08a0f6"/></linearGradient><linearGradient id="u32" x1="0" y1="0" x2="1" y2="0"><stop offset="0" stop-color="#ff7a85"/><stop offset="1" stop-color="#ff3d68"/></linearGradient></defs>
<rect x="0.5" y="0.5" width="58" height="59" rx="11" fill="#fff" stroke="#ececec" stroke-width="1"/>
<g fill="none" stroke="url(#u31)" stroke-width="5">
<circle cx="18.2" cy="35.3" r="8.3"/>
<path d="M24.07 41.17L35.04 29.85"/>
<path d="M35.04 29.85A8.3 8.3 0 1 1 34.59 40.18" stroke-linecap="round"/>
<circle cx="29.5" cy="22.7" r="9.2"/>
</g>
<path d="M20.3 22.7A9.2 9.2 0 0 0 38.7 22.7" fill="none" stroke="url(#u32)" stroke-width="5.2" stroke-linecap="round"/>
<rect x="19.5" y="56" width="10" height="4" fill="#fe4365"/><rect x="29.5" y="56" width="10" height="4" fill="#2f8bf7"/></svg>
<div class="t" style="left:384px;top:527px;color:#111;">百度网盘</div>
<div class="t" style="left:384px;top:548px;color:#6d6d6d;">双击运行百度网盘</div>
<svg style="left:636px;top:523px" width="59" height="46" viewBox="0 0 59 46"><defs><linearGradient id="u33" gradientUnits="userSpaceOnUse" x1="52" y1="2" x2="18" y2="44"><stop offset="0" stop-color="#62a8ff"/><stop offset="1" stop-color="#1030ff"/></linearGradient>
<linearGradient id="u34" gradientUnits="userSpaceOnUse" x1="38" y1="30" x2="4" y2="46"><stop offset="0" stop-color="#e2ecff"/><stop offset="1" stop-color="#6a90f3"/></linearGradient></defs>
<g fill="url(#u33)"><circle cx="29.4" cy="19.9" r="19.9"/><circle cx="49" cy="36.3" r="9.5"/><path d="M10 19.9H49V45.8H10Z"/></g>
<path d="M12.3 21.3A12.25 12.25 0 0 0 12.3 45.8H44Q37 45.8 31 36.5Q22.5 21.3 12.3 21.3Z" fill="url(#u34)"/></svg>
<div class="t" style="left:702px;top:527px;color:#111;">夸克网盘</div>
<div class="t" style="left:702px;top:548px;color:#6d6d6d;">双击运行夸克网盘</div>
<svg style="left:955px;top:517px" width="22" height="22" viewBox="0 0 22 22"><path d="M0 2.8L9.8 1.5V10.3H0Z M10.8 1.35L22 0V10.3H10.8Z M0 11.3H9.8V20L0 18.7Z M10.8 11.3H22V21.5L10.8 20.1Z" fill="#0a74da"/></svg>
<svg style="left:958px;top:534px" width="52" height="27" viewBox="0 0 52 27"><defs><linearGradient id="u35" x1="0" y1="0" x2="0" y2="1"><stop offset="0" stop-color="#2b2b2b"/><stop offset="1" stop-color="#5f5f5f"/></linearGradient><linearGradient id="u36" x1="0" y1="0" x2="0" y2="1"><stop offset="0" stop-color="#e9eaed"/><stop offset="1" stop-color="#dcdde0"/></linearGradient></defs>
<path d="M11 0H40.5L52 11H0Z" fill="url(#u36)"/>
<rect x="0" y="10.5" width="52" height="16.5" rx="1.2" fill="#8a8a8a"/>
<rect x="1.3" y="10.8" width="49.4" height="14.8" rx="0.8" fill="url(#u35)"/>
<circle cx="10" cy="18.3" r="2.4" fill="#2fe02f"/><circle cx="9.6" cy="17.9" r="1" fill="#b8ffb8"/></svg>
<div class="t" style="left:1020px;top:517px;color:#111;">本地磁盘 (C:)</div>
<div class="a" style="left:1020px;top:537px;width:236px;height:18px;background:#e6e6e6;border:1px solid #bcbcbc"></div>
<div class="a" style="left:1021px;top:538px;width:154px;height:16px;background:#26a0da"></div>
<div class="t" style="left:1020px;top:557px;color:#6d6d6d;">37.5 GB 可用，共 111 GB</div>
<svg style="left:322px;top:607px" width="52" height="27" viewBox="0 0 52 27"><defs><linearGradient id="u37" x1="0" y1="0" x2="0" y2="1"><stop offset="0" stop-color="#2b2b2b"/><stop offset="1" stop-color="#5f5f5f"/></linearGradient><linearGradient id="u38" x1="0" y1="0" x2="0" y2="1"><stop offset="0" stop-color="#e9eaed"/><stop offset="1" stop-color="#dcdde0"/></linearGradient></defs>
<path d="M11 0H40.5L52 11H0Z" fill="url(#u38)"/>
<rect x="0" y="10.5" width="52" height="16.5" rx="1.2" fill="#8a8a8a"/>
<rect x="1.3" y="10.8" width="49.4" height="14.8" rx="0.8" fill="url(#u37)"/>
<circle cx="10" cy="18.3" r="2.4" fill="#2fe02f"/><circle cx="9.6" cy="17.9" r="1" fill="#b8ffb8"/></svg>
<div class="t" style="left:384px;top:590px;color:#111;">pic (D:)</div>
<div class="a" style="left:384px;top:610px;width:236px;height:18px;background:#e6e6e6;border:1px solid #bcbcbc"></div>
<div class="a" style="left:385px;top:611px;width:208px;height:16px;background:#26a0da"></div>
<div class="t" style="left:384px;top:630px;color:#6d6d6d;">7.86 GB 可用，共 70.0 GB</div>
<svg style="left:640px;top:607px" width="52" height="27" viewBox="0 0 52 27"><defs><linearGradient id="u39" x1="0" y1="0" x2="0" y2="1"><stop offset="0" stop-color="#2b2b2b"/><stop offset="1" stop-color="#5f5f5f"/></linearGradient><linearGradient id="u40" x1="0" y1="0" x2="0" y2="1"><stop offset="0" stop-color="#e9eaed"/><stop offset="1" stop-color="#dcdde0"/></linearGradient></defs>
<path d="M11 0H40.5L52 11H0Z" fill="url(#u40)"/>
<rect x="0" y="10.5" width="52" height="16.5" rx="1.2" fill="#8a8a8a"/>
<rect x="1.3" y="10.8" width="49.4" height="14.8" rx="0.8" fill="url(#u39)"/>
<circle cx="10" cy="18.3" r="2.4" fill="#2fe02f"/><circle cx="9.6" cy="17.9" r="1" fill="#b8ffb8"/></svg>
<div class="t" style="left:702px;top:590px;color:#111;">接收文件 (E:)</div>
<div class="a" style="left:702px;top:610px;width:236px;height:18px;background:#e6e6e6;border:1px solid #bcbcbc"></div>
<div class="a" style="left:703px;top:611px;width:185px;height:16px;background:#26a0da"></div>
<div class="t" style="left:702px;top:630px;color:#6d6d6d;">61.5 GB 可用，共 288 GB</div>
<svg style="left:958px;top:607px" width="52" height="27" viewBox="0 0 52 27"><defs><linearGradient id="u41" x1="0" y1="0" x2="0" y2="1"><stop offset="0" stop-color="#2b2b2b"/><stop offset="1" stop-color="#5f5f5f"/></linearGradient><linearGradient id="u42" x1="0" y1="0" x2="0" y2="1"><stop offset="0" stop-color="#e9eaed"/><stop offset="1" stop-color="#dcdde0"/></linearGradient></defs>
<path d="M11 0H40.5L52 11H0Z" fill="url(#u42)"/>
<rect x="0" y="10.5" width="52" height="16.5" rx="1.2" fill="#8a8a8a"/>
<rect x="1.3" y="10.8" width="49.4" height="14.8" rx="0.8" fill="url(#u41)"/>
<circle cx="10" cy="18.3" r="2.4" fill="#2fe02f"/><circle cx="9.6" cy="17.9" r="1" fill="#b8ffb8"/></svg>
<div class="t" style="left:1020px;top:590px;color:#111;">下载 (F:)</div>
<div class="a" style="left:1020px;top:610px;width:236px;height:18px;background:#e6e6e6;border:1px solid #bcbcbc"></div>
<div class="a" style="left:1021px;top:611px;width:197px;height:16px;background:#26a0da"></div>
<div class="t" style="left:1020px;top:630px;color:#6d6d6d;">46.7 GB 可用，共 287 GB</div>
<svg style="left:322px;top:680px" width="52" height="27" viewBox="0 0 52 27"><defs><linearGradient id="u43" x1="0" y1="0" x2="0" y2="1"><stop offset="0" stop-color="#2b2b2b"/><stop offset="1" stop-color="#5f5f5f"/></linearGradient><linearGradient id="u44" x1="0" y1="0" x2="0" y2="1"><stop offset="0" stop-color="#e9eaed"/><stop offset="1" stop-color="#dcdde0"/></linearGradient></defs>
<path d="M11 0H40.5L52 11H0Z" fill="url(#u44)"/>
<rect x="0" y="10.5" width="52" height="16.5" rx="1.2" fill="#8a8a8a"/>
<rect x="1.3" y="10.8" width="49.4" height="14.8" rx="0.8" fill="url(#u43)"/>
<circle cx="10" cy="18.3" r="2.4" fill="#2fe02f"/><circle cx="9.6" cy="17.9" r="1" fill="#b8ffb8"/></svg>
<div class="t" style="left:384px;top:663px;color:#111;">设计PSD (G:)</div>
<div class="a" style="left:384px;top:683px;width:236px;height:18px;background:#e6e6e6;border:1px solid #bcbcbc"></div>
<div class="a" style="left:385px;top:684px;width:227px;height:16px;background:#da2626"></div>
<div class="t" style="left:384px;top:703px;color:#6d6d6d;">9.27 GB 可用，共 286 GB</div>
<svg style="left:640px;top:680px" width="52" height="27" viewBox="0 0 52 27"><defs><linearGradient id="u45" x1="0" y1="0" x2="0" y2="1"><stop offset="0" stop-color="#2b2b2b"/><stop offset="1" stop-color="#5f5f5f"/></linearGradient><linearGradient id="u46" x1="0" y1="0" x2="0" y2="1"><stop offset="0" stop-color="#e9eaed"/><stop offset="1" stop-color="#dcdde0"/></linearGradient></defs>
<path d="M11 0H40.5L52 11H0Z" fill="url(#u46)"/>
<rect x="0" y="10.5" width="52" height="16.5" rx="1.2" fill="#8a8a8a"/>
<rect x="1.3" y="10.8" width="49.4" height="14.8" rx="0.8" fill="url(#u45)"/>
<circle cx="10" cy="18.3" r="2.4" fill="#2fe02f"/><circle cx="9.6" cy="17.9" r="1" fill="#b8ffb8"/></svg>
<div class="t" style="left:702px;top:663px;color:#111;">固态 (H:)</div>
<div class="a" style="left:702px;top:683px;width:236px;height:18px;background:#e6e6e6;border:1px solid #bcbcbc"></div>
<div class="a" style="left:703px;top:684px;width:133px;height:16px;background:#26a0da"></div>
<div class="t" style="left:702px;top:703px;color:#6d6d6d;">48.5 GB 可用，共 111 GB</div>
<svg style="left:958px;top:680px" width="52" height="27" viewBox="0 0 52 27"><defs><linearGradient id="u47" x1="0" y1="0" x2="0" y2="1"><stop offset="0" stop-color="#2b2b2b"/><stop offset="1" stop-color="#5f5f5f"/></linearGradient><linearGradient id="u48" x1="0" y1="0" x2="0" y2="1"><stop offset="0" stop-color="#e9eaed"/><stop offset="1" stop-color="#dcdde0"/></linearGradient></defs>
<path d="M11 0H40.5L52 11H0Z" fill="url(#u48)"/>
<rect x="0" y="10.5" width="52" height="16.5" rx="1.2" fill="#8a8a8a"/>
<rect x="1.3" y="10.8" width="49.4" height="14.8" rx="0.8" fill="url(#u47)"/>
<circle cx="10" cy="18.3" r="2.4" fill="#2fe02f"/><circle cx="9.6" cy="17.9" r="1" fill="#b8ffb8"/></svg>
<div class="t" style="left:1020px;top:663px;color:#111;">本地磁盘 (J:)</div>
<div class="a" style="left:1020px;top:683px;width:236px;height:18px;background:#e6e6e6;border:1px solid #bcbcbc"></div>
<div class="a" style="left:1021px;top:684px;width:201px;height:16px;background:#26a0da"></div>
<div class="t" style="left:1020px;top:703px;color:#6d6d6d;">83.4 MB 可用，共 578 MB</div><div class="t" style="left:20px;top:973px;color:#222;">16 个项目</div>
<div class="a" style="left:98px;top:977px;width:1px;height:13px;background:#f0f0f0"></div>
<div class="a" style="left:1441px;top:973px;width:20px;height:20px;background:#f3f3f3"></div>
<svg style="left:1444px;top:977px" width="15" height="14" viewBox="0 0 15 14"><path d="M0 0.6H14M0 4.6H14M0 8.6H14M0 12.6H14" stroke="#000" stroke-width="1.1"/></svg>
<div class="a" style="left:1469px;top:973px;width:20px;height:20px;background:#f3f3f3"></div>
<svg style="left:1472px;top:976px" width="15" height="15" viewBox="0 0 15 15"><rect x="0.6" y="0.6" width="13" height="11" fill="#fff" stroke="#000" stroke-width="1.1"/><path d="M0 13.6H14.2" stroke="#000" stroke-width="1.1"/></svg>
</body></html>
